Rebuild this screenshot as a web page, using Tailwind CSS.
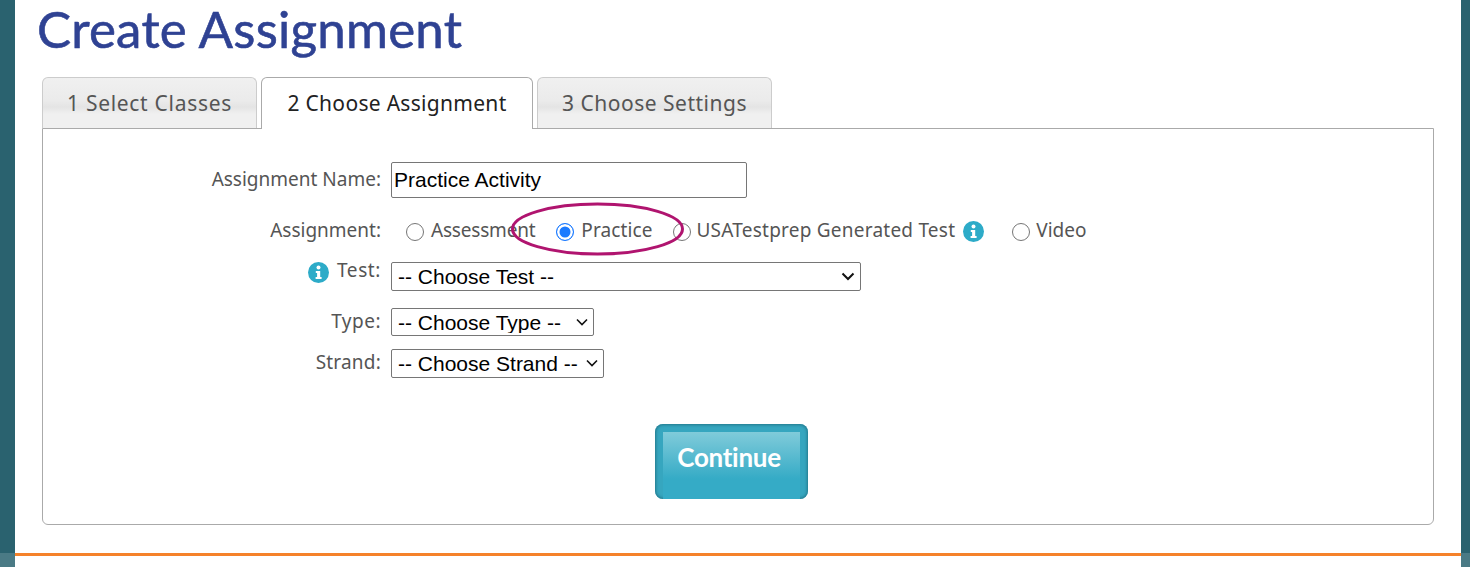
<!DOCTYPE html>
<html lang="en">
<head>
<meta charset="utf-8">
<title>Create Assignment</title>
<script src="https://cdn.jsdelivr.net/npm/@tailwindcss/browser@4"></script>
</head>
<body class="bg-white overflow-hidden">
<div class="flex h-[567px] w-[1470px] font-['Noto_Sans',sans-serif] text-[#555]">
  <div class="w-[15px] shrink-0 flex flex-col">
    <div class="h-[553px] bg-[#2a626f]"></div>
    <div class="flex-1 bg-[#4a7a85]"></div>
  </div>
  <main class="flex-1 flex flex-col relative">
    <h1 class="h-[77px] pl-[22px] pt-[1px] text-[51px] leading-[56px] tracking-[0.25px] text-[#2f4293] font-['Lato',sans-serif] [-webkit-text-stroke:0.6px_#2f4293]">Create Assignment</h1>
    <div class="flex gap-[4px] pl-[27px] h-[52px] relative z-10 text-[21px] tracking-[0.3px]">
      <div class="w-[215px] h-[51px] border border-b-0 border-[#ccc] rounded-t-[6px] bg-[linear-gradient(#f0f0f0,#ebebeb_45%,#e4e4e4_58%,#f0f0f0_72%)] flex items-center justify-center pt-[2px] tracking-[0.7px]">1 Select Classes</div>
      <div class="w-[272px] h-[52px] border border-b-0 border-[#aaa] rounded-t-[6px] bg-white text-[#222] flex items-center justify-center pb-[0px]">2 Choose Assignment</div>
      <div class="w-[235px] h-[51px] border border-b-0 border-[#ccc] rounded-t-[6px] bg-[linear-gradient(#f0f0f0,#ebebeb_45%,#e4e4e4_58%,#f0f0f0_72%)] flex items-center justify-center pt-[2px] tracking-[0.5px]">3 Choose Settings</div>
    </div>
    <section class="relative ml-[27px] w-[1392px] h-[397px] -mt-[1px] border border-[#aaa] rounded-b-[6px] text-[19px]">
      <div class="grid grid-cols-[338px_1fr] gap-x-[10px] pt-[33px]">
        <label class="text-right leading-[34px] h-[34px]">Assignment Name:</label>
        <input class="w-[356px] h-[36px] border border-[#767676] rounded-[2px] px-[2px] text-[21px] text-black font-['Liberation_Sans',sans-serif]" type="text" value="Practice Activity">

        <label class="text-right leading-[30px] h-[30px] mt-[17px]">Assignment:</label>
        <div class="flex items-center h-[30px] mt-[17px] pl-[15px]">
          <input type="radio" name="a" class="appearance-none w-[18px] h-[18px] rounded-full border border-[#767676] bg-white mt-[4px]">
          <span class="ml-[7px] tracking-[-0.2px]">Assessment</span>
          <input type="radio" name="a" checked class="appearance-none w-[18px] h-[18px] ml-[21px] rounded-full border border-[#1a7aff] bg-[#1a7aff] shadow-[inset_0_0_0_2.5px_white] mt-[4px]">
          <span class="ml-[7px] tracking-[0.1px]">Practice</span>
          <input type="radio" name="a" class="appearance-none w-[18px] h-[18px] ml-[21px] rounded-full border border-[#767676] bg-white mt-[4px]">
          <span class="ml-[5px] tracking-[0.23px]">USATestprep Generated Test</span>
          <svg class="ml-[8px] w-[21px] h-[21px] mt-[2px]" viewBox="0 0 21 21" aria-hidden="true"><circle cx="10.5" cy="10.5" r="10.5" fill="#2dabc8"/><circle cx="10.5" cy="5.6" r="2" fill="#fff"/><path d="M7.8 9h4.4v6h1.4v2H7.6v-2h1.5v-4H7.8z" fill="#fff"/></svg>
          <input type="radio" name="a" class="appearance-none w-[18px] h-[18px] ml-[28px] rounded-full border border-[#767676] bg-white mt-[4px]">
          <span class="ml-[6px]">Video</span>
        </div>

        <label class="flex items-center justify-end gap-[8px] h-[26px] mt-[15px] tracking-[0.6px]">
          <svg class="w-[21px] h-[21px] -mt-[1px]" viewBox="0 0 21 21" aria-hidden="true"><circle cx="10.5" cy="10.5" r="10.5" fill="#2dabc8"/><circle cx="10.5" cy="5.6" r="2" fill="#fff"/><path d="M7.8 9h4.4v6h1.4v2H7.6v-2h1.5v-4H7.8z" fill="#fff"/></svg>
          <span class="-mt-[6px]">Test:</span>
        </label>
        <div class="relative w-[470px] h-[29px] mt-[17px]">
          <select class="appearance-none w-full h-full border border-[#767676] rounded-[2px] pl-[6px] leading-[21px] text-[21px] text-black bg-white font-['Liberation_Sans',sans-serif]"><option>-- Choose Test --</option></select>
          <svg class="absolute right-[6px] top-[10px] w-[14px] h-[9px]" viewBox="0 0 14 9" aria-hidden="true"><path d="M1.5 1.5 7 7l5.5-5.5" fill="none" stroke="#111" stroke-width="2"/></svg>
        </div>

        <label class="text-right leading-[28px] h-[28px] mt-[16px] tracking-[0.5px]">Type:</label>
        <div class="relative w-[203px] h-[28px] mt-[17px]">
          <select class="appearance-none w-full h-full border border-[#767676] rounded-[2px] pl-[6px] leading-[21px] text-[21px] text-black bg-white font-['Liberation_Sans',sans-serif]"><option>-- Choose Type --</option></select>
          <svg class="absolute right-[6px] top-[10px] w-[12px] h-[8px]" viewBox="0 0 12 8" aria-hidden="true"><path d="M1 1.5 6 6.5l5-5" fill="none" stroke="#111" stroke-width="1.6"/></svg>
        </div>

        <label class="text-right leading-[28px] h-[28px] mt-[12px] tracking-[0.2px]">Strand:</label>
        <div class="relative w-[213px] h-[29px] mt-[13px]">
          <select class="appearance-none w-full h-full border border-[#767676] rounded-[2px] pl-[6px] leading-[21px] text-[21px] text-black bg-white font-['Liberation_Sans',sans-serif]"><option>-- Choose Strand --</option></select>
          <svg class="absolute right-[6px] top-[10px] w-[12px] h-[8px]" viewBox="0 0 12 8" aria-hidden="true"><path d="M1 1.5 6 6.5l5-5" fill="none" stroke="#111" stroke-width="1.6"/></svg>
        </div>
      </div>
      <div class="flex justify-center pt-[46px] pr-[13px]">
        <button class="w-[153px] h-[75px] rounded-[8px] bg-[#36a6bf] px-[8px] pt-[8px] shadow-[inset_0_0_3px_1px_#22788c]">
          <span class="flex h-full w-full items-center justify-center pb-[16px] pr-[5px] bg-[linear-gradient(#80cbda,#35abc6_70%)] text-white font-bold text-[26px] tracking-[-0.3px] font-['Lato',sans-serif]">Continue</span>
        </button>
      </div>
      <svg class="absolute left-[467px] top-[73px] w-[176px] h-[54px] pointer-events-none" viewBox="0 0 176 54" aria-hidden="true"><ellipse cx="87.5" cy="27" rx="85" ry="25" fill="none" stroke="#b0146f" stroke-width="3"/></svg>
    </section>
    <div class="mt-[28px] h-[3px] bg-[#f5822a]"></div>
  </main>
  <div class="w-[9px] shrink-0 flex flex-col">
    <div class="h-[553px] bg-[#2a626f]"></div>
    <div class="flex-1 bg-[#4a7a85]"></div>
  </div>
</div>
</body>
</html>
